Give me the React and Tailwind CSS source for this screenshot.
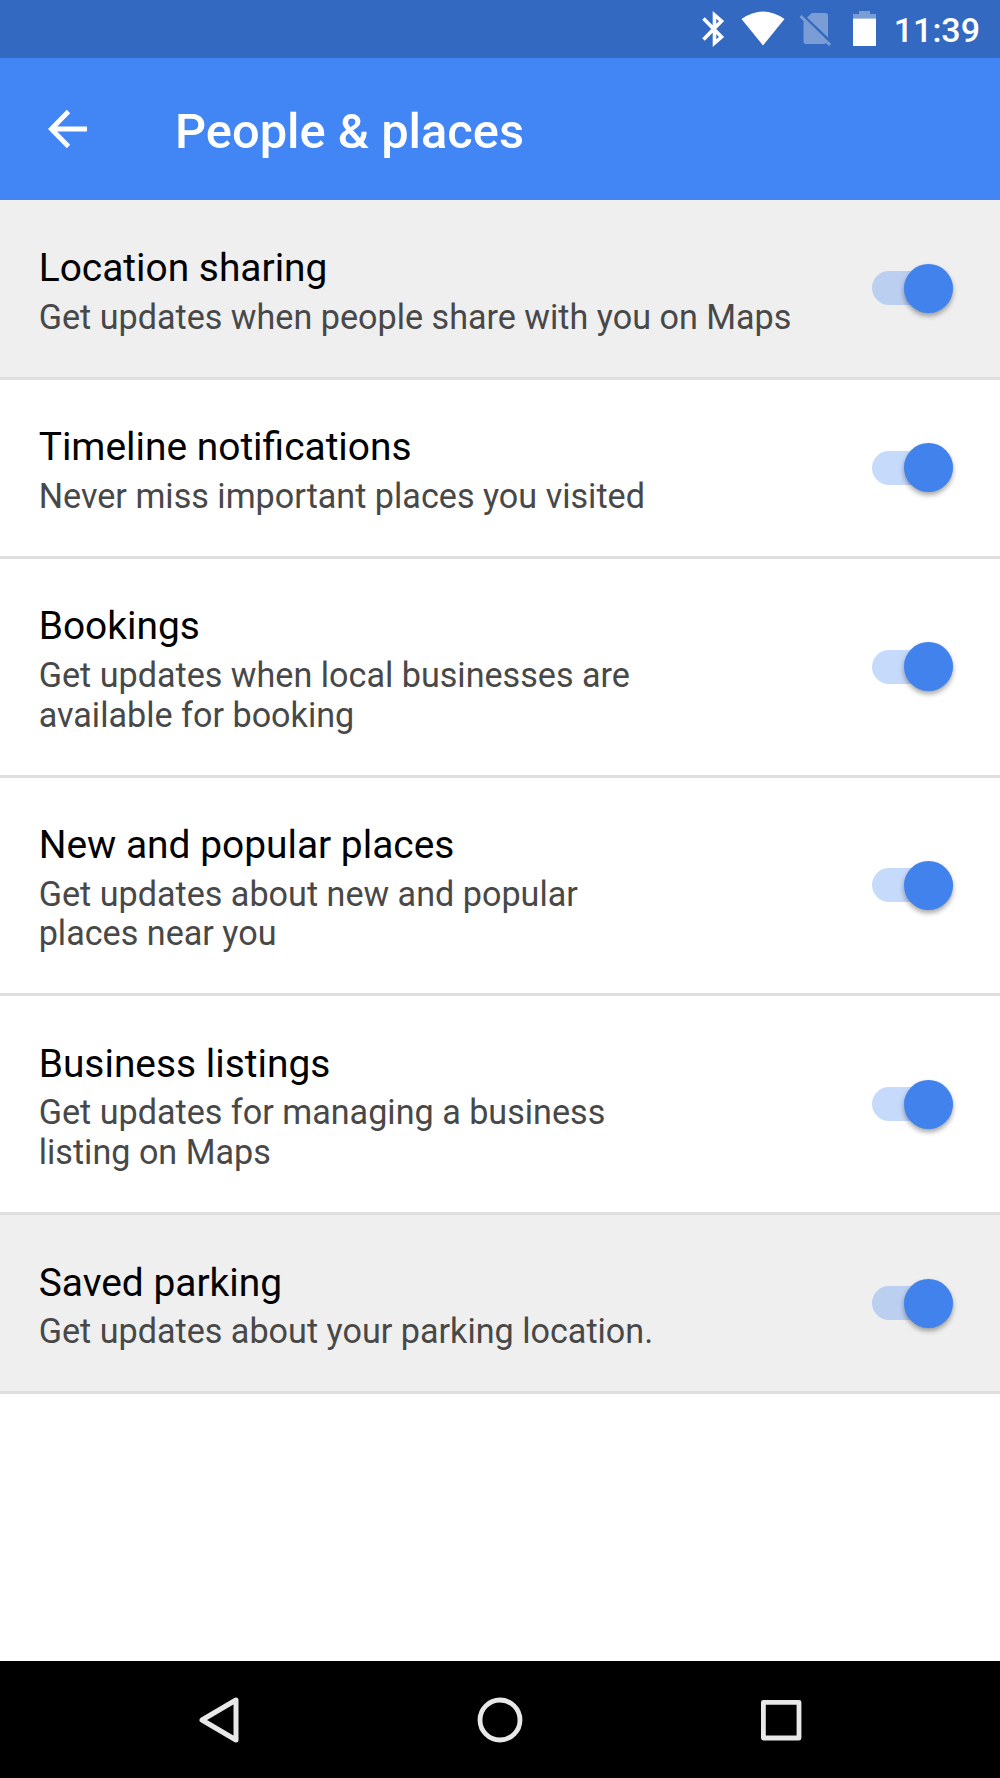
import React, { useState } from 'react';

const SETTINGS = [
  { id: 'location', title: 'Location sharing', lines: ['Get updates when people share with you on Maps'], shaded: true },
  { id: 'timeline', title: 'Timeline notifications', lines: ['Never miss important places you visited'] },
  { id: 'bookings', title: 'Bookings', lines: ['Get updates when local businesses are', 'available for booking'] },
  { id: 'places', title: 'New and popular places', lines: ['Get updates about new and popular', 'places near you'] },
  { id: 'business', title: 'Business listings', lines: ['Get updates for managing a business', 'listing on Maps'] },
  { id: 'parking', title: 'Saved parking', lines: ['Get updates about your parking location.'], shaded: true },
];

function StatusBar() {
  return (
    <div className="flex h-[58px] items-center justify-end bg-[#3369c1] pr-[20px] text-white">
      <svg className="h-[58px] w-[194px]" viewBox="0 0 194 58" fill="none">
        {/* bluetooth */}
        <path d="M3.500 18.500L21.500 37L14.500 43V15L21.500 21L3.500 39.500" stroke="currentColor" strokeWidth="3.600" />
        {/* wifi */}
        <path d="M41.500 19Q63 4 84.500 19L63 45.500Z" fill="currentColor" />
        {/* no sim */}
        <path d="M112 13H125Q128 13 128 15.500V37.500L107 17.500Z" fill="#fff" fillOpacity="0.35" />
        <path d="M103.500 21L126 43Q125 44 124 44H106Q103.500 44 103.500 41.500Z" fill="#fff" fillOpacity="0.35" />
        <path d="M100.500 16L130 45" stroke="#fff" strokeOpacity="0.35" strokeWidth="3" />
        {/* battery */}
        <path d="M159 11H170V14H176V18.500H153V14H159Z" fill="#fff" fillOpacity="0.35" />
        <path d="M153 18.500H176V46H153Z" fill="currentColor" />
      </svg>
      <span className="pt-[2px] text-[34px] font-medium leading-none">11:39</span>
    </div>
  );
}

function Header() {
  return (
    <div className="flex h-[142.400px] items-center bg-[#4285f4] text-white">
      <button className="ml-[48px] mr-[87px]" aria-label="Back">
        <svg className="h-[40px] w-[40px]" viewBox="0 0 40 40" fill="none" stroke="currentColor" strokeWidth="4.800">
          <path d="M39 20H4M20.500 2.500L3.300 20L20.500 37.500" />
        </svg>
      </button>
      <h1 className="pt-[6px] text-[48.800px] font-medium leading-none">People &amp; places</h1>
    </div>
  );
}

function Switch({ checked, onChange }) {
  return (
    <button
      role="switch"
      aria-checked={checked}
      onClick={onChange}
      className={`flex h-[34px] w-[80.500px] shrink-0 items-center rounded-full ${checked ? 'justify-end bg-[#4285f4]/30' : 'justify-start bg-black/25'}`}
    >
      <span className={`size-[49px] shrink-0 rounded-full shadow-[0_3px_5px_rgba(0,0,0,0.35)] ${checked ? 'bg-[#4182ed]' : 'bg-gray-50'}`} />
    </button>
  );
}

function SettingRow({ setting, checked, onToggle }) {
  return (
    <div
      className={`flex items-center justify-between border-b-3 border-[#dfdfdf] pl-[38.700px] pr-[47.500px]
        ${setting.lines.length > 1 ? 'h-[218.800px]' : 'h-[179.200px]'} ${setting.shaded ? 'bg-[#efefef]' : 'bg-white'}`}
    >
      <div className="pt-[5.500px]">
        <div className="mb-[6.500px] text-[38.900px] leading-[46px] text-black">{setting.title}</div>
        <div className="text-[34.150px] leading-[39.800px] text-[#484848]">
          {setting.lines.map(line => (
            <div key={line} className="whitespace-nowrap">{line}</div>
          ))}
        </div>
      </div>
      <Switch checked={checked} onChange={onToggle} />
    </div>
  );
}

function NavBar() {
  return (
    <div className="flex h-[117px] items-center justify-center gap-[233px] bg-black text-[#e8e8e8]">
      <svg className="size-[48px]" viewBox="0 0 48 48" fill="none" stroke="currentColor" strokeWidth="5" strokeLinejoin="round">
        <path d="M41 4V44L7 24Z" />
      </svg>
      <svg className="size-[48px]" viewBox="0 0 48 48" fill="none" stroke="currentColor" strokeWidth="4.800">
        <circle cx="24" cy="24" r="20" />
      </svg>
      <svg className="size-[48px]" viewBox="0 0 48 48" fill="none" stroke="currentColor" strokeWidth="4.800" strokeLinejoin="round">
        <rect x="6.400" y="6.400" width="35.600" height="35.600" />
      </svg>
    </div>
  );
}

export default function App() {
  const [enabled, setEnabled] = useState(() => Object.fromEntries(SETTINGS.map(s => [s.id, true])));

  const toggle = id => setEnabled(prev => ({ ...prev, [id]: !prev[id] }));

  return (
    <div className="flex h-[1778px] w-[1000px] flex-col bg-white font-[Roboto,sans-serif]">
      <StatusBar />
      <Header />
      <div className="flex-1">
        {SETTINGS.map(setting => (
          <SettingRow
            key={setting.id}
            setting={setting}
            checked={enabled[setting.id]}
            onToggle={() => toggle(setting.id)}
          />
        ))}
      </div>
      <NavBar />
    </div>
  );
}
